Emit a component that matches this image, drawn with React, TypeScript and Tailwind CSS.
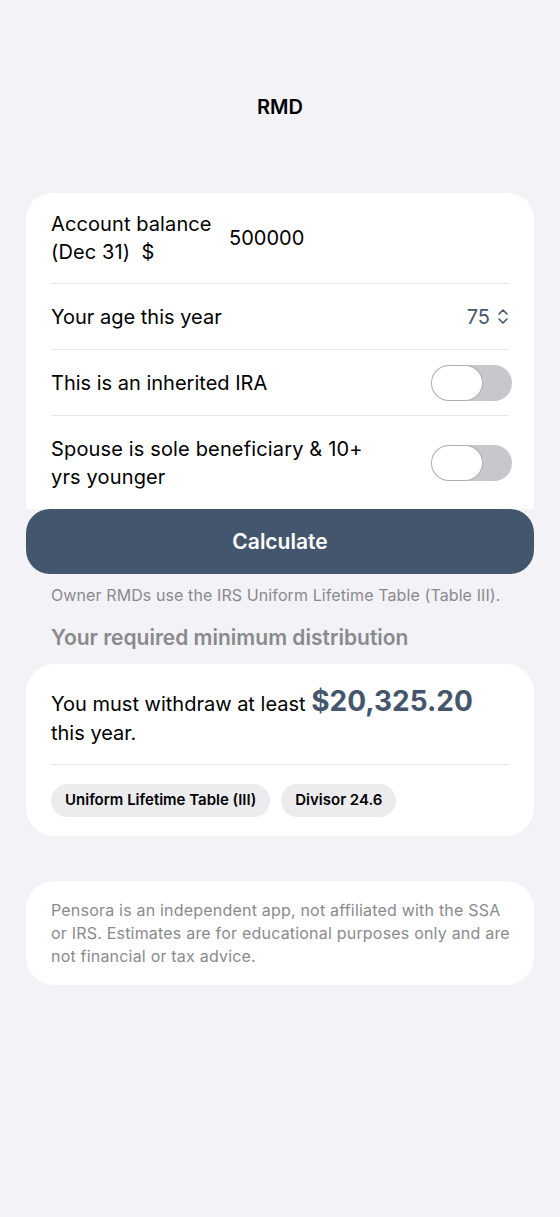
import React from "react";

function Toggle() {
  return (
    <div className="relative h-[36px] w-[81px] shrink-0 rounded-full bg-[#c8c8cc]">
      <div className="absolute left-[1px] top-[1px] h-[34px] w-[50px] rounded-full bg-white shadow-[0_0_0_1px_rgba(0,0,0,0.12)]" />
    </div>
  );
}

function UpDown() {
  return (
    <svg width="12" height="17" viewBox="0 0 12 17" fill="none" className="ml-[7px]">
      <path d="M2 6 L6 2 L10 6" stroke="#45566c" strokeWidth="1.6" strokeLinecap="round" strokeLinejoin="round" />
      <path d="M2 11 L6 15 L10 11" stroke="#45566c" strokeWidth="1.6" strokeLinecap="round" strokeLinejoin="round" />
    </svg>
  );
}

export default function App() {
  return (
    <div className="min-h-[1217px] w-full bg-[#f2f2f7] px-[26px] font-['Inter',sans-serif] text-black">
      <div className="pt-[93px] text-center text-[20px] font-semibold leading-[28px]">RMD</div>

      <div className="mt-[72px] rounded-t-[26px] bg-white px-[25px]">
        <div className="flex h-[91px] items-center border-b border-[#e6e6ea]">
          <div className="w-[178px] text-[20px] leading-[28px] tracking-[0.1px]">
            <div>Account balance</div>
            <div>(Dec 31)&nbsp; $</div>
          </div>
          <div className="text-[20px] leading-[28px]">500000</div>
        </div>
        <div className="flex h-[66px] items-center justify-between border-b border-[#e6e6ea]">
          <div className="text-[20px] leading-[28px]">Your age this year</div>
          <div className="flex items-center text-[20px] leading-[28px] text-[#45566c]">
            75
            <UpDown />
          </div>
        </div>
        <div className="flex h-[66px] items-center justify-between border-b border-[#e6e6ea]">
          <div className="text-[20px] leading-[28px]">This is an inherited IRA</div>
          <div className="-mr-[3px]">
            <Toggle />
          </div>
        </div>
        <div className="flex h-[93px] items-center justify-between">
          <div className="w-[330px] text-[20px] leading-[28px] tracking-[0.15px]">
            Spouse is sole beneficiary &amp; 10+ yrs younger
          </div>
          <div className="-mr-[3px]">
            <Toggle />
          </div>
        </div>
      </div>

      <button className="flex h-[65px] w-full items-center justify-center rounded-[24px] bg-[#43566e] text-[21px] font-semibold text-white">
        Calculate
      </button>

      <div className="mt-[11px] px-[25px] text-[16px] leading-[20px] tracking-[0.1px] text-[#8a8a8e]">
        Owner RMDs use the IRS Uniform Lifetime Table (Table III).
      </div>

      <div className="mt-[19px] px-[25px] text-[21px] font-semibold leading-[28px] text-[#8a8a8e]">
        Your required minimum distribution
      </div>

      <div className="mt-[12px] rounded-[28px] bg-white px-[25px] pb-[19px] pt-[23px]">
        <div className="border-b border-[#e6e6ea] pb-[16px] text-[20px] leading-[29px]">
          You must withdraw at least{" "}
          <span className="text-[28px] font-bold text-[#45566c]">$20,325.20</span> this year.
        </div>
        <div className="mt-[19px] flex gap-[11px]">
          <div className="flex h-[33px] items-center rounded-full bg-[#ececee] px-[14px] text-[15px] font-semibold">
            Uniform Lifetime Table (III)
          </div>
          <div className="flex h-[33px] items-center rounded-full bg-[#ececee] px-[14px] text-[15px] font-semibold">
            Divisor 24.6
          </div>
        </div>
      </div>

      <div className="mt-[45px] rounded-[28px] bg-white px-[25px] pb-[17px] pt-[18px] text-[16px] leading-[23px] tracking-[0.2px] text-[#8a8a8e]">
        <span className="block whitespace-nowrap">Pensora is an independent app, not affiliated with the SSA</span>
        <span className="block whitespace-nowrap">or IRS. Estimates are for educational purposes only and are</span>
        <span className="block whitespace-nowrap">not financial or tax advice.</span>
      </div>
    </div>
  );
}
